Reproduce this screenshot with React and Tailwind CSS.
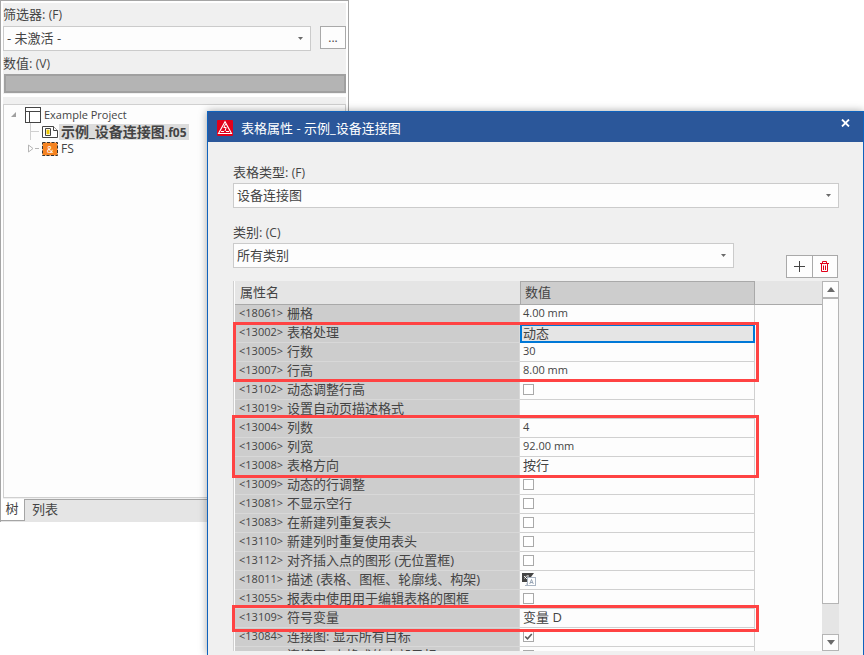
import { useState } from "react";

const properties = [
    { id: "18061", name: "栅格", value: "4.00 mm" },
    { id: "13002", name: "表格处理", value: "动态", selected: true },
    { id: "13005", name: "行数", value: "30" },
    { id: "13007", name: "行高", value: "8.00 mm" },
    { id: "13102", name: "动态调整行高", type: "check" },
    { id: "13019", name: "设置自动页描述格式", value: "" },
    { id: "13004", name: "列数", value: "4" },
    { id: "13006", name: "列宽", value: "92.00 mm" },
    { id: "13008", name: "表格方向", value: "按行" },
    { id: "13009", name: "动态的行调整", type: "check" },
    { id: "13081", name: "不显示空行", type: "check" },
    { id: "13083", name: "在新建列重复表头", type: "check" },
    { id: "13110", name: "新建列时重复使用表头", type: "check" },
    { id: "13112", name: "对齐插入点的图形 (无位置框)", type: "check" },
    { id: "18011", name: "描述 (表格、图框、轮廓线、构架)", type: "translate" },
    { id: "13055", name: "报表中使用用于编辑表格的图框", type: "check" },
    { id: "13109", name: "符号变量", value: "变量 D" },
    { id: "13084", name: "连接图: 显示所有目标", type: "check", checked: true },
    { id: "13085", name: "连接图: 小格式的内部目标", type: "check" },
];

function Latin({ children }) {
    return <span className="text-[12px]">{children}</span>;
}

function Select({ id, value, className }) {
    return (
        <div className={`grid items-center ${className}`}>
            <select id={id} className="col-start-1 row-start-1 h-[25px] w-full appearance-none border border-[#cbcbcb] bg-[#fdfdfd] px-[3px] text-[13px]">
                <option>{value}</option>
            </select>
            <svg className="pointer-events-none col-start-1 row-start-1 mr-[8px] justify-self-end" width="5" height="3" viewBox="0 0 5 3">
                <path d="M0 0h5L2.5 3z" fill="#6a6a6a" />
            </svg>
        </div>
    );
}

function CheckBox({ label, defaultChecked }) {
    const [checked, setChecked] = useState(Boolean(defaultChecked));

    return (
        <span className="grid h-[11px] w-[11px] items-center justify-items-center">
            <input
                type="checkbox"
                aria-label={label}
                checked={checked}
                onChange={(e) => setChecked(e.target.checked)}
                className="col-start-1 row-start-1 h-[11px] w-[11px] appearance-none border border-[#a9a9a9] bg-white"
            />
            {checked && (
                <svg className="pointer-events-none col-start-1 row-start-1" width="9" height="9" viewBox="0 0 9 9" fill="none">
                    <path d="M1.2 4.5l2.3 2.3L7.8 2" stroke="#5a5a5a" strokeWidth="1.6" />
                </svg>
            )}
        </span>
    );
}

function TranslateIcon() {
    return (
        <svg className="-ml-px" width="14" height="13" viewBox="0 0 14 13">
            <path d="M0 0h12L9 4H5v5H0z" fill="#444" />
            <path d="M2 3l3 3M5 2.500L2.500 5.500M5 3h2" stroke="#fff" strokeWidth="0.9" />
            <path d="M3 12.500h2V10" stroke="#a9b4c2" fill="none" />
            <rect x="5.500" y="4.500" width="8" height="8" fill="#fff" stroke="#a9b4c2" />
            <path d="M7.700 11l1.800-4.500L11.300 11M8.300 9.500h2.400" stroke="#8292a6" strokeWidth="0.8" fill="none" />
        </svg>
    );
}

function ProjectIcon() {
    return (
        <svg width="16" height="16" viewBox="0 0 16 16" fill="#fff" stroke="#444">
            <rect x="0.500" y="0.500" width="15" height="15" />
            <path d="M0.500 4.500h15M4.500 4.500v11" />
        </svg>
    );
}

function FormIcon() {
    return (
        <svg width="16" height="12" viewBox="0 0 16 12" fill="#fff" stroke="#444">
            <path d="M.5.500h11l4 4v7H.5z" />
            <path d="M11.500.500v4h4" />
            <path d="M3.500 2.500h5v7h-5z" />
            <path d="M4.500 4.500h3M4.500 6h3M4.500 7.500h3" stroke="#ecc500" strokeWidth="1.500" />
        </svg>
    );
}

function FsIcon() {
    return (
        <svg width="16" height="14" viewBox="0 0 16 14">
            <rect x="0.500" y="0.500" width="15" height="13" fill="#f5821f" stroke="#333" strokeDasharray="3 1.500" />
            <text x="8" y="10.500" textAnchor="middle" fontSize="9" fill="#fff">&amp;</text>
        </svg>
    );
}

function WarningLogo() {
    return (
        <svg className="mt-px" width="16" height="16" viewBox="0 0 16 16">
            <rect width="16" height="16" rx="1" fill="#e2001a" />
            <path d="M8 1.700L1.500 13.500h13z" fill="none" stroke="#fff" strokeWidth="1.100" />
            <path d="M8.600 4L6.800 7.500h2.400L8 11M4 11.500h3M9 11.500h3" fill="none" stroke="#fff" />
        </svg>
    );
}

function NavigatorPanel() {
    return (
        <section className="flex h-[522px] w-[349px] flex-col border-x border-t border-[#a5a5a5] bg-white">
            <div className="mx-[2px] mt-[2px] h-[91px] bg-[#f0f0f0]">
                <label htmlFor="filter" className="block h-[23px] leading-[23px]">筛选器: <Latin>(F)</Latin></label>
                <div className="flex items-start">
                    <Select id="filter" value="- 未激活 -" className="w-[308px]" />
                    <button aria-label="筛选器设置" className="ml-[9px] h-[23px] w-[26px] border border-[#a9a9a9] bg-[#fdfdfd] text-[12px] leading-[20px]">...</button>
                </div>
                <label htmlFor="value" className="block h-[23px] leading-[25px]">数值: <Latin>(V)</Latin></label>
                <input id="value" disabled className="ml-px block h-[19px] w-[342px] border-2 border-[#a0a0a0] bg-[#b4b4b4]" />
            </div>

            <div className="mx-[2px] mt-[3px] flex-1 bg-[#f0f0f0] pt-[7px]">
                <ul className="h-[394px] border border-[#d0d0d0] bg-[#fdfdfd] pt-px leading-[17px]">
                    <li className="flex h-[17px] items-center">
                        <svg className="ml-[7px] mr-[9px]" width="5" height="5" viewBox="0 0 5 5"><path d="M5 0v5H0z" fill="#a0a0a0" /></svg>
                        <ProjectIcon />
                        <span className="ml-[3px] text-[11px]">Example Project</span>
                    </li>
                    <li className="flex h-[17px] items-center">
                        <svg className="ml-[26px] mr-[3px]" width="9" height="17" viewBox="0 0 9 17" fill="none" stroke="#d0d0d0"><path d="M.5 0v17M.5 8.500H9" /></svg>
                        <FormIcon />
                        <span className="ml-px h-[16px] whitespace-nowrap bg-[#dcdcdc] px-[2px] text-[14px] font-bold leading-[15px]">示例_设备连接图<Latin>.f05</Latin></span>
                    </li>
                    <li className="flex h-[17px] items-center">
                        <svg className="ml-[24px] mr-[3px]" width="11" height="9" viewBox="0 0 11 9" fill="none" stroke="#b5b5b5"><path d="M.5 1v7l4.500-3.500zM7 4.500h4" /></svg>
                        <FsIcon />
                        <span className="ml-[3px] text-[12px]">FS</span>
                    </li>
                </ul>
            </div>

            <div role="tablist" className="flex h-[23px] bg-[#e5e5e5]">
                <button role="tab" aria-selected="true" className="h-[22px] w-[24px] border-b border-r border-[#a5a5a5] bg-white pb-px pr-px">树</button>
                <button role="tab" aria-selected="false" className="flex-1 border-t border-[#a5a5a5] pb-[2px] pl-[7px] text-left">列表</button>
            </div>
        </section>
    );
}

function PropertyRow({ item }) {
    return (
        <tr className="h-[19px]">
            <th scope="row" className="border-b border-r border-[#d8d8d8] bg-[#cdcdcd] p-0 pl-[4px] text-left font-normal">
                <div className="flex h-[18px] items-center whitespace-nowrap leading-[16px] pb-[2px]">
                    <span className="w-[48px] text-[11px]">&lt;{item.id}&gt;</span>
                    <span>{item.name}</span>
                </div>
            </th>
            <td className={item.selected ? "border-2 border-[#0078d7] bg-[#e5e5e5] p-0 pl-px" : "border-b border-r border-[#d0d0d0] p-0 pl-[3px]"}>
                <div className={`flex items-center whitespace-nowrap leading-[16px] ${item.selected ? "h-[15px] pb-px" : "h-[18px] pb-[2px]"}`}>
                    {item.type === "check" && <CheckBox label={item.name} defaultChecked={item.checked} />}
                    {item.type === "translate" && <TranslateIcon />}
                    {!item.type && (/^[\d.]/.test(item.value) ? <span className="text-[11px]">{item.value}</span> : item.value)}
                </div>
            </td>
            <td className="p-0" />
        </tr>
    );
}

function Scrollbar() {
    return (
        <div className="flex w-[17px] flex-col bg-[#e5e5e5]">
            <button aria-label="向上滚动" className="flex h-[17px] items-center justify-center border border-[#b5b5b5] bg-[#fdfdfd]">
                <svg width="8" height="5" viewBox="0 0 8 5"><path d="M0 5h8L4 0z" fill="#6a6a6a" /></svg>
            </button>
            <div className="h-[306px] border border-[#b5b5b5] bg-[#fdfdfd]" />
            <div className="flex-1" />
            <button aria-label="向下滚动" className="flex h-[17px] items-center justify-center border border-[#b5b5b5] bg-[#fdfdfd]">
                <svg width="8" height="5" viewBox="0 0 8 5"><path d="M0 0h8L4 5z" fill="#6a6a6a" /></svg>
            </button>
        </div>
    );
}

function PropertyTable() {
    return (
        <div className="relative mt-[3px] min-h-0 flex-1">
            <div className="flex h-full border-l border-[#d0d0d0] bg-[#fdfdfd]">
                <div className="min-w-0 flex-1 overflow-hidden pl-px">
                    <table className="w-full table-fixed border-separate border-spacing-0">
                        <colgroup>
                            <col className="w-[285px]" />
                            <col className="w-[235px]" />
                            <col />
                        </colgroup>
                        <thead>
                            <tr className="h-[24px] bg-[#e5e5e5] text-left">
                                <th className="border-b border-[#a9a9a9] p-0 pl-[5px] font-normal">属性名</th>
                                <th className="border border-[#a9a9a9] bg-[#cdcdcd] p-0 pl-[4px] font-normal">数值</th>
                                <th className="border-b border-[#a9a9a9] p-0" />
                            </tr>
                        </thead>
                        <tbody>
                            {properties.map((item) => (
                                <PropertyRow key={item.id} item={item} />
                            ))}
                        </tbody>
                    </table>
                </div>
                <Scrollbar />
            </div>
            {/* highlighted groups of rows */}
            <div className="pointer-events-none absolute left-0 top-[41px] h-[60px] w-[526px] border-[3px] border-[#ff4343]" />
            <div className="pointer-events-none absolute -left-px top-[134px] h-[63px] w-[527px] border-[3px] border-[#ff4343]" />
            <div className="pointer-events-none absolute -left-px top-[324px] h-[27px] w-[527px] border-[3px] border-[#ff4343]" />
        </div>
    );
}

function PropertiesDialog() {
    return (
        <section role="dialog" aria-label="表格属性" className="absolute bottom-0 left-[207px] right-0 top-[111px] flex flex-col border-x border-t border-[#0f62bd] bg-[#f0f0f0] shadow-[0_0_8px_rgba(0,0,0,0.35)]">
            <header className="flex h-[30px] shrink-0 items-center bg-[#2b579a] pl-[9px] pr-[13px] text-white">
                <WarningLogo />
                <h1 className="ml-[8px] flex-1 pt-[4px]">表格属性 - 示例_设备连接图</h1>
                <button aria-label="关闭" className="mb-[8px]">
                    <svg width="9" height="8" viewBox="0 0 9 8"><path d="M1 .5l7 7M8 .5l-7 7" stroke="#fff" strokeWidth="1.800" /></svg>
                </button>
            </header>
            <div className="flex min-h-0 flex-1 flex-col pb-[4px] pl-[25px] pr-[24px] pt-[18px]">
                <label htmlFor="type" className="h-[23px] leading-[25px]">表格类型: <Latin>(F)</Latin></label>
                <Select id="type" value="设备连接图" className="w-full" />
                <div className="mt-[12px] flex h-[58px] items-end">
                    <div className="flex-1 self-start">
                        <label htmlFor="category" className="block h-[23px] leading-[25px]">类别: <Latin>(C)</Latin></label>
                        <Select id="category" value="所有类别" className="w-full" />
                    </div>
                    <button aria-label="新建" className="ml-[52px] flex h-[23px] w-[27px] items-center justify-center border border-[#a9a9a9] bg-[#fdfdfd] pr-px">
                        <svg width="11" height="11" viewBox="0 0 11 11"><path d="M5.500 0v11M0 5.500h11" stroke="#444" /></svg>
                    </button>
                    <button aria-label="删除" className="-ml-px mr-px flex h-[23px] w-[26px] items-center justify-center border border-[#a9a9a9] bg-[#fdfdfd] pr-px">
                        <svg width="9" height="11" viewBox="0 0 9 11" fill="none" stroke="#e2001a">
                            <path d="M0 2.500h9M2.500 2V.5h4V2M1.500 3v7.500h6V3M3.500 4.500V9M5.500 4.500V9" />
                        </svg>
                    </button>
                </div>
                <PropertyTable />
            </div>
        </section>
    );
}

export default function App() {
    return (
        <main className="relative h-screen overflow-hidden bg-white font-['Open_Sans','Noto_Sans_CJK_SC',sans-serif] text-[13px] text-[#444]">
            <NavigatorPanel />
            <PropertiesDialog />
        </main>
    );
}
